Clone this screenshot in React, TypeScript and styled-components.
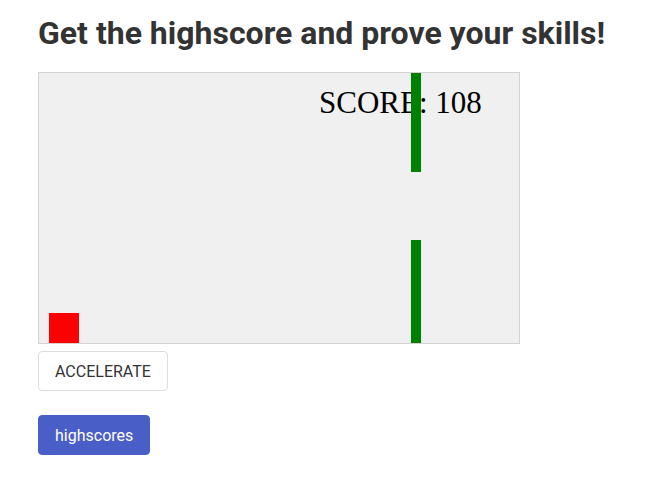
import React from "react";
import styled, { createGlobalStyle } from "styled-components";

const Global = createGlobalStyle`
  html, body { margin: 0; padding: 0; background: #ffffff; }
  body { font-family: Roboto, "Noto Sans", Arial, sans-serif; color: #333333; }
`;

const Page = styled.main`
  display: flex;
  flex-direction: column;
  align-items: flex-start;
  padding: 14px 38px;
`;

const Title = styled.h1`
  margin: 0 0 20px;
  font-size: 32px;
  line-height: 38px;
  font-weight: 700;
  color: #333333;
`;

const Board = styled.div`
  box-sizing: border-box;
  width: 482px;
  height: 272px;
  border: 1px solid #d3d3d3;
  background: #f0f0f0;
  margin-bottom: 7px;
`;

const Button = styled.button<{ $primary?: boolean }>`
  box-sizing: border-box;
  height: 40px;
  padding: 0 16px;
  border-radius: 4px;
  border: 1px solid ${(p) => (p.$primary ? "#4a5ec8" : "#dddddd")};
  background: ${(p) => (p.$primary ? "#4a5ec8" : "#ffffff")};
  color: ${(p) => (p.$primary ? "#ffffff" : "#333333")};
  font-family: Roboto, "Noto Sans", Arial, sans-serif;
  font-size: 16px;
  cursor: pointer;
  margin-bottom: ${(p) => (p.$primary ? "0" : "24px")};
`;

const pipes = [{ x: 372, top: 99, bottomStart: 167 }];

function Game({ score }: { score: number }) {
  return (
    <Board>
      <svg width="480" height="270" viewBox="0 0 480 270" style={{ display: "block" }}>
        <rect x="10" y="240" width="30" height="30" fill="#ff0000" />
        <text
          x="280"
          y="40"
          fontFamily='"Liberation Serif", "Times New Roman", serif'
          fontSize="31"
          fill="#000000"
        >
          SCORE: {score}
        </text>
        {pipes.map((p, i) => (
          <g key={i}>
            <rect x={p.x} y="0" width="10" height={p.top} fill="#008000" />
            <rect x={p.x} y={p.bottomStart} width="10" height={270 - p.bottomStart} fill="#008000" />
          </g>
        ))}
      </svg>
    </Board>
  );
}

export default function App() {
  return (
    <>
      <Global />
      <Page>
        <Title>Get the highscore and prove your skills!</Title>
        <Game score={108} />
        <Button>ACCELERATE</Button>
        <Button $primary>highscores</Button>
      </Page>
    </>
  );
}
